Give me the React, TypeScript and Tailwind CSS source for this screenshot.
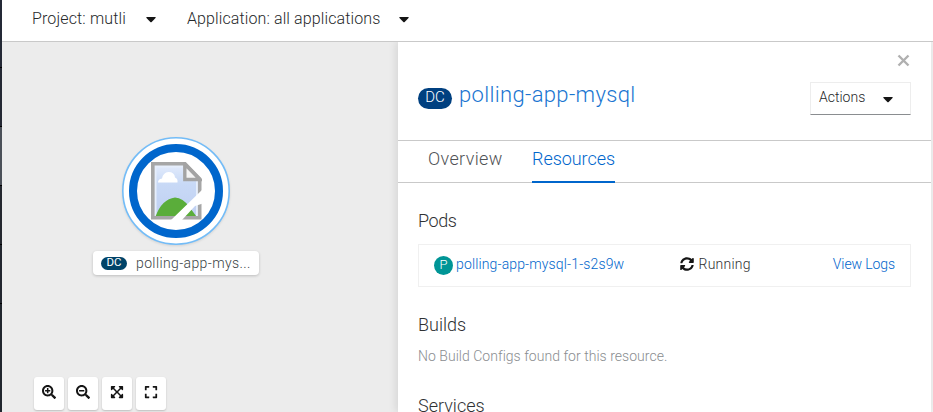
import type { ReactNode } from "react";
import { FaSearchPlus, FaSearchMinus, FaExpandArrowsAlt, FaExpand, FaSyncAlt } from "react-icons/fa";

function Caret({ className = "" }: { className?: string }) {
  return (
    <svg width="10" height="6" viewBox="0 0 10 6" className={`shrink-0 ${className}`}>
      <path d="M.8 0h8.4q.9.1.3.9L5.7 4.9q-.7.7-1.4 0L.5.9Q-.1.1.8 0z" fill="#151515" />
    </svg>
  );
}

function ControlButton({ label, children }: { label: string; children: ReactNode }) {
  return (
    <button
      aria-label={label}
      className="flex h-[33px] w-[30px] items-center justify-center rounded-[3px] bg-white pb-[3px] text-[#151515] shadow-[0_1px_2px_rgba(3,3,3,0.2)]"
    >
      {children}
    </button>
  );
}

function BrokenImage() {
  return (
    <svg x="28" y="24" width="51" height="58" viewBox="0 0 51 58">
      <defs>
        <linearGradient id="sky" x1="0" y1="0" x2="0" y2="1">
          <stop offset="0" stopColor="#dfe9fb" />
          <stop offset="0.35" stopColor="#c8d9f6" />
          <stop offset="1" stopColor="#c0d0f2" />
        </linearGradient>
      </defs>
      <path d="M1.8 1.8H34L48.200 17v38.200H1.800z" fill="#e6eefb" />
      <path d="M5.500 5.500H32v13.500h13V53H5.500z" fill="url(#sky)" />
      <path d="M7 20.500q0-3.500 4-4 1-6 6.500-6.500 6 0 6.500 5.500 3 1 2.500 5z" fill="#fff" />
      <path d="M4.500 54.500Q11 37 24 35.500q8 .5 14 9l7.500 10z" fill="#5aad3a" />
      <path d="M1.800 1.800H34L48.700 17v38.700H1.800z" fill="none" stroke="#a6a6a6" strokeWidth="3.600" />
      <path d="M33.800 2v15.500h15z" fill="#f4f4f4" stroke="#a3a3a3" strokeWidth="3.400" />
      <path d="M52 27v14.500L44 44 31 58H20z" fill="#fff" />
    </svg>
  );
}

function Toolbar() {
  return (
    <header className="relative z-10 flex h-[42px] shrink-0 items-start border-b border-[#c9c9c9] bg-white pl-[30px] text-[16px] font-light leading-[20px] text-[#26282a]">
      <button className="flex w-[155px] items-center pt-[9px]">
        <span className="w-[114px] whitespace-nowrap text-left tracking-[0.14px]">Project: mutli</span>
        <Caret className="mt-[2px]" />
      </button>
      <button className="flex items-center pt-[9px]">
        <span className="w-[212px] whitespace-nowrap text-left tracking-[0.11px]">Application: all applications</span>
        <Caret className="mt-[2px]" />
      </button>
    </header>
  );
}

function Topology() {
  return (
    <main className="flex w-[396px] shrink-0 flex-col bg-[#ececec] pl-[32px] pt-[95px]">
      <div className="flex w-[226px] flex-col items-center pl-[58px]">
        <svg width="108" height="108" viewBox="0 0 108 108" className="drop-shadow-[0_1px_1px_rgba(3,3,3,0.1)]">
          <circle cx="54" cy="54" r="53.200" fill="#fff" stroke="#73bcf7" strokeWidth="1.600" />
          <circle cx="54" cy="54" r="43" fill="#fff" stroke="#06c" strokeWidth="8" />
          <g transform="translate(1 1)"><BrokenImage /></g>
        </svg>
        <div className="mt-[6px] flex h-[24px] w-[166px] shrink-0 items-center rounded-[4px] bg-white pl-[8px] shadow-[0_1px_3px_rgba(3,3,3,0.2)]">
          <span className="flex h-[13px] w-[26px] items-center justify-center rounded-full bg-[#004368] text-[11.5px] leading-none text-white">DC</span>
          <span className="ml-[9px] whitespace-nowrap text-[14px] font-light tracking-[0.38px] text-[#393f44]">polling-app-mys...</span>
        </div>
      </div>
      <div className="mt-[102px] flex gap-[4px]">
        <ControlButton label="Zoom in"><FaSearchPlus size={14} /></ControlButton>
        <ControlButton label="Zoom out"><FaSearchMinus size={14} /></ControlButton>
        <ControlButton label="Fit to screen"><FaExpandArrowsAlt size={14} /></ControlButton>
        <ControlButton label="Reset view"><FaExpand size={14} /></ControlButton>
      </div>
    </main>
  );
}

function DetailPanel() {
  return (
    <aside className="flex w-[533px] shrink-0 flex-col bg-white font-light shadow-[-2px_0_8px_rgba(3,3,3,0.1)]">
      <div className="flex h-[40px] shrink-0 justify-end pr-[21px] pt-[12px]">
        <svg width="13" height="13" viewBox="0 0 13 13" aria-label="Close">
          <path d="M1.500 1.500l10 10m0-10l-10 10" stroke="#b0b0b0" strokeWidth="2.400" />
        </svg>
      </div>
      <div className="flex h-[59px] shrink-0 border-b border-[#c9c9c9] pl-[20px] pr-[20px]">
        <span className="mt-[6px] flex h-[21px] w-[34px] items-center justify-center rounded-full bg-[#004080] pb-[3px] text-[15px] leading-none text-white">DC</span>
        <h1 className="-mt-[1px] ml-[7px] whitespace-nowrap text-[22px] leading-[28px] tracking-[0.34px] text-[#1a75d1]">polling-app-mysql</h1>
        <button className="ml-auto flex h-[33px] w-[101px] items-center border border-b-[#8a8d90] border-x-[#ededed] border-t-[#ededed] pl-[8px] text-[14px] text-[#26282a]">
          <span className="w-[64px] pb-[2px] text-left">Actions</span>
          <Caret className="mt-[2px]" />
        </button>
      </div>
      <nav className="flex h-[42px] shrink-0 border-b border-[#c9c9c9] pl-[30px] text-[18px] leading-[24px] text-[#4f5255]">
        <span className="w-[104px] whitespace-nowrap pt-[6px] tracking-[0.35px]">Overview</span>
        <span className="h-[42px] w-[83px] whitespace-nowrap border-b-2 border-[#06c] pt-[6px] tracking-[-0.05px] text-[#06c]">Resources</span>
      </nav>
      <section className="flex flex-col px-[20px] text-[#2f3133]">
        <h2 className="mt-[26px] text-[18px] leading-[24px] tracking-[-0.4px]">Pods</h2>
        <div className="mt-[11px] flex h-[43px] items-center border border-[#f0f0f0] px-[15px] text-[14px]">
          <span className="flex h-[19px] w-[19px] items-center justify-center rounded-full bg-[#009596] pb-[2px] text-[13px] leading-none text-white">P</span>
          <a className="ml-[3px] w-[224px] whitespace-nowrap pb-[2px] tracking-[0.14px] text-[#06c]">polling-app-mysql-1-s2s9w</a>
          <FaSyncAlt size={14} className="mb-[3px] text-[#151515]" />
          <span className="ml-[4.500px] pb-[2px] tracking-[0.25px]">Running</span>
          <a className="ml-auto whitespace-nowrap pb-[2px] tracking-[-0.1px] text-[#06c]">View Logs</a>
        </div>
        <h2 className="mt-[26px] text-[18px] leading-[24px]">Builds</h2>
        <p className="mt-[9px] whitespace-nowrap text-[14px] leading-[20px] tracking-[0.03px] text-[#8a8d90]">No Build Configs found for this resource.</p>
        <h2 className="mt-[28px] text-[18px] leading-[24px]">Services</h2>
      </section>
    </aside>
  );
}

export default function App() {
  return (
    <div className="flex h-[412px] w-[933px] overflow-hidden bg-[#f0f0f0] font-['Roboto','Liberation_Sans',sans-serif]">
      <div className="flex w-[2px] shrink-0 flex-col gap-px bg-black">
        <div className="h-[67px] bg-[#242936]" />
        <div className="h-[58px] bg-[#242834]" />
        <div className="h-[58px] bg-[#4b5059]" />
        <div className="h-[58px] bg-[#24272f]" />
        <div className="h-[58px] bg-[#22262f]" />
        <div className="flex-1 bg-[#21262e]" />
      </div>
      <div className="flex w-[931px] flex-col">
        <Toolbar />
        <div className="flex h-[370px]">
          <Topology />
          <DetailPanel />
        </div>
      </div>
    </div>
  );
}
